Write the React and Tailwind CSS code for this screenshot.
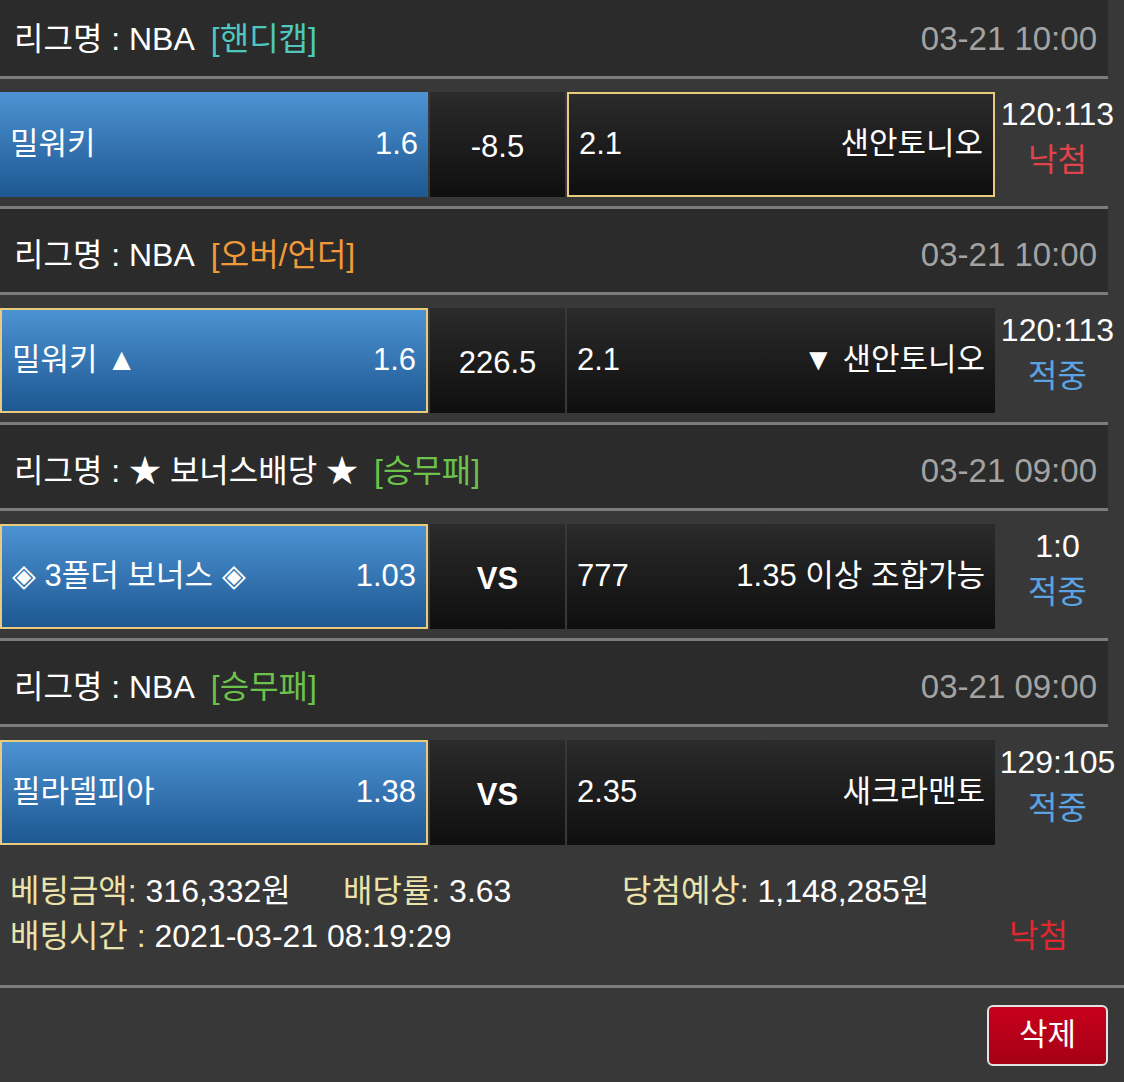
import React from 'react';

const font = { fontFamily: '"Liberation Sans", "Noto Sans CJK KR", Arial, sans-serif' };

const bets = [
  {
    league: 'NBA',
    tag: '[핸디캡]',
    tagColor: 'text-[#4fc7bd]',
    date: '03-21 10:00',
    home: '밀워키',
    homeOdds: '1.6',
    mid: '-8.5',
    midBold: false,
    awayOdds: '2.1',
    away: '샌안토니오',
    pick: 'away',
    score: '120:113',
    result: '낙첨',
  },
  {
    league: 'NBA',
    tag: '[오버/언더]',
    tagColor: 'text-[#f19a3a]',
    date: '03-21 10:00',
    home: '밀워키 ▲',
    homeOdds: '1.6',
    mid: '226.5',
    midBold: false,
    awayOdds: '2.1',
    away: '▼ 샌안토니오',
    pick: 'home',
    score: '120:113',
    result: '적중',
  },
  {
    league: '★ 보너스배당 ★',
    tag: '[승무패]',
    tagColor: 'text-[#6cc24a]',
    date: '03-21 09:00',
    home: '◈ 3폴더 보너스 ◈',
    homeOdds: '1.03',
    mid: 'VS',
    midBold: true,
    awayOdds: '777',
    away: '1.35 이상 조합가능',
    pick: 'home',
    score: '1:0',
    result: '적중',
  },
  {
    league: 'NBA',
    tag: '[승무패]',
    tagColor: 'text-[#6cc24a]',
    date: '03-21 09:00',
    home: '필라델피아',
    homeOdds: '1.38',
    mid: 'VS',
    midBold: true,
    awayOdds: '2.35',
    away: '새크라맨토',
    pick: 'home',
    score: '129:105',
    result: '적중',
  },
];

const Line = () => <div className="w-[1108px] h-[3px] bg-[#7c7c7c]" />;

const BetBlock = ({ bet, first, last }) => (
  <div>
    {/* league header */}
    <div className={`w-[1108px] bg-[#2b2b2b] flex items-center justify-between pl-[14px] pr-[11px] ${first ? 'h-[76px] pt-[2px]' : 'h-[83px] pt-[8px]'}`}>
      <div className="text-[32px] text-white">
        리그명 : {bet.league}
        <span className={`ml-[16px] ${bet.tagColor}`}>{bet.tag}</span>
      </div>
      <div className="text-[33px] text-[#a3a3a3]">{bet.date}</div>
    </div>
    <Line />

    {/* match row */}
    <div className={`flex items-start pt-[13px] ${last ? 'h-[116px]' : 'h-[127px]'}`}>
      <div className={`w-[428px] h-[105px] flex items-center justify-between pl-[10px] pr-[10px] text-[31px] text-white bg-gradient-to-b from-[#4d93d4] to-[#1d5891] ${bet.pick === 'home' ? 'border-2 border-[#eacb7e]' : ''}`}>
        <span>{bet.home}</span>
        <span>{bet.homeOdds}</span>
      </div>
      <div className={`ml-[2px] w-[135px] h-[105px] flex items-center justify-center pt-[6px] text-[31px] text-white bg-gradient-to-b from-[#2b2b2b] to-[#0f0f0f] ${bet.midBold ? 'font-bold' : ''}`}>
        {bet.mid}
      </div>
      <div className={`ml-[2px] w-[428px] h-[105px] flex items-center justify-between pl-[10px] pr-[10px] text-[31px] text-white bg-gradient-to-b from-[#2b2b2b] to-[#0f0f0f] ${bet.pick === 'away' ? 'border-2 border-[#eacb7e]' : ''}`}>
        <span>{bet.awayOdds}</span>
        <span>{bet.away}</span>
      </div>
      <div className="w-[125px] flex flex-col items-center -mt-[1px] leading-[46px] text-[32px]">
        <span className="text-white">{bet.score}</span>
        <span className={bet.result === '낙첨' ? 'text-[#e0434a]' : 'text-[#5ba3e2]'}>{bet.result}</span>
      </div>
    </div>
    {!last && <Line />}
  </div>
);

export default function App() {
  return (
    <div className="w-[1124px] h-[1082px] overflow-hidden bg-[#383838]" style={font}>
      {bets.map((b, i) => (
        <BetBlock key={i} bet={b} first={i === 0} last={i === bets.length - 1} />
      ))}

      {/* bet summary */}
      <div className="h-[142px] pl-[10px] pt-[26px] text-[32px] leading-[45px]">
        <div className="flex">
          <div className="w-[333px]">
            <span className="text-[#ebe3ab]">베팅금액: </span>
            <span className="text-white">316,332원</span>
          </div>
          <div className="w-[279px]">
            <span className="text-[#ebe3ab]">배당률: </span>
            <span className="text-white">3.63</span>
          </div>
          <div>
            <span className="text-[#ebe3ab]">당첨예상: </span>
            <span className="text-white">1,148,285원</span>
          </div>
        </div>
        <div className="flex justify-between pr-[56px]">
          <div>
            <span className="text-[#ebe3ab]">배팅시간 : </span>
            <span className="text-white">2021-03-21 08:19:29</span>
          </div>
          <span className="text-[#e0282e]">낙첨</span>
        </div>
      </div>
      <div className="w-full h-[3px] bg-[#7c7c7c]" />

      <div className="flex justify-end pr-[16px] pt-[17px]">
        <button className="w-[121px] h-[61px] rounded-[6px] border-2 border-[#e2e2e2] bg-gradient-to-b from-[#c8001c] to-[#a50016] text-white text-[31px]">
          삭제
        </button>
      </div>
    </div>
  );
}
